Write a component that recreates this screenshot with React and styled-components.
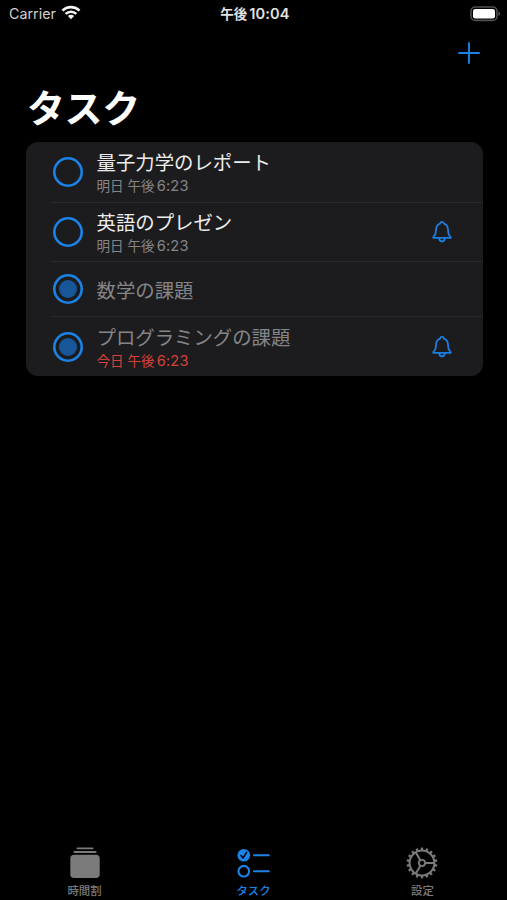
import React from "react";
import styled, { createGlobalStyle } from "styled-components";

const tasks = [
  { id: 1, title: "量子力学のレポート", due: "明日 午後", time: "6:23", height: 60 },
  { id: 2, title: "英語のプレゼン", due: "明日 午後", time: "6:23", height: 59, bell: true },
  { id: 3, title: "数学の課題", height: 55, done: true },
  {
    id: 4,
    title: "プログラミングの課題",
    due: "今日 午後",
    time: "6:23",
    height: 60,
    bell: true,
    done: true,
    late: true,
  },
];

const teeth = Array.from({ length: 18 }, (_, i) => i * 20);

function WifiIcon() {
  return (
    <svg width="20" height="15" viewBox="0 0 20 15" fill="none" stroke="#f4f4f4">
      <path d="M1.5 5.6a12.1 12.1 0 0 1 17 0" strokeWidth="2.7" />
      <path d="M4.6 8.9a7.7 7.7 0 0 1 10.8 0" strokeWidth="2.4" />
      <path d="M10 14.2 6.9 11.1a4.4 4.4 0 0 1 6.2 0z" fill="#f4f4f4" stroke="none" />
    </svg>
  );
}

function BatteryIcon() {
  return (
    <svg width="31" height="16" viewBox="0 0 31 16">
      <rect x="1" y="1" width="26" height="13.4" rx="4.2" fill="none" stroke="#505050" strokeWidth="1.6" />
      <rect x="3" y="3" width="22" height="9.4" rx="2.2" fill="#fff" />
      <path d="M28.4 5.4q1.9.8 1.9 2.3t-1.9 2.3z" fill="#505050" />
    </svg>
  );
}

function BellIcon() {
  return (
    <svg width="20" height="24" viewBox="0 0 20 24" fill="none" stroke="#1b7ee2" strokeWidth="1.8" strokeLinejoin="round">
      <path d="M1.2 17.8c-.2-1.1 1-1.9 1.7-2.9 1-1.4.9-3 1.1-5.4.2-3 1.4-5 4-5.9.3-1.2 1-1.8 2-1.8s1.7.6 2 1.8c2.6.9 3.8 2.9 4 5.9.2 2.4.1 4 1.1 5.4.7 1 1.9 1.8 1.7 2.9z" />
      <path d="M7.2 18c.1 2.3 1.3 3.5 2.8 3.5s2.7-1.2 2.8-3.5" />
    </svg>
  );
}

function StackIcon() {
  return (
    <svg width="34" height="34" viewBox="0 0 34 34" fill="#7b7b7b">
      <rect x="8.5" y="1.4" width="17" height="1.9" rx=".8" />
      <rect x="5.5" y="5" width="23" height="2" rx=".8" />
      <rect x="2.3" y="8.8" width="29.4" height="23.2" rx="3.8" />
    </svg>
  );
}

function ChecklistIcon() {
  return (
    <svg width="34" height="34" viewBox="0 0 34 34" fill="none" stroke="#1b82e8">
      <circle cx="6.8" cy="9.2" r="6.3" fill="#1b82e8" stroke="none" />
      <path d="m4 9.6 2 2.4 3.6-5.6" stroke="#000" strokeWidth="1.5" strokeLinecap="round" />
      <circle cx="6.8" cy="25.2" r="5.3" strokeWidth="2.1" />
      <path d="M17 9.2h14.8M17 25.2h14.8" strokeWidth="2.1" strokeLinecap="round" />
    </svg>
  );
}

function GearIcon() {
  return (
    <svg width="34" height="34" viewBox="1 0 34 34" fill="none" stroke="#7b7b7b">
      <circle cx="17" cy="17" r="12.4" strokeWidth="2" />
      <circle cx="17" cy="17" r="3.1" strokeWidth="1.9" />
      <path d="M20.1 17h9M15.4 14.3 10.8 6.4M15.4 19.7l-4.6 7.9" strokeWidth="2" />
      {teeth.map((angle) => (
        <path key={angle} d="M17 1.6v2.7" strokeWidth="2.3" transform={`rotate(${angle} 17 17)`} />
      ))}
    </svg>
  );
}

function App() {
  return (
    <Screen>
      <GlobalStyle />
      <StatusBar>
        <Carrier>
          <span>Carrier</span>
          <WifiIcon />
        </Carrier>
        <Clock>
          午後<b>10:04</b>
        </Clock>
        <Battery>
          <BatteryIcon />
        </Battery>
      </StatusBar>
      <NavBar>
        <AddButton aria-label="追加">
          <svg width="22" height="22" viewBox="0 0 22 22" stroke="#1b82e8" strokeWidth="1.9" strokeLinecap="round">
            <path d="M11 1v20M1 11h20" />
          </svg>
        </AddButton>
      </NavBar>
      <Title>タスク</Title>
      <TaskList>
        {tasks.map((task) => (
          <TaskRow key={task.id} $height={task.height}>
            <Check $done={task.done} />
            <TaskBody>
              <TaskText>
                <TaskTitle $done={task.done}>{task.title}</TaskTitle>
                {task.due && (
                  <Due $late={task.late}>
                    {task.due}
                    <span>{task.time}</span>
                  </Due>
                )}
              </TaskText>
              {task.bell && <BellIcon />}
            </TaskBody>
          </TaskRow>
        ))}
      </TaskList>
      <TabBar>
        <Tab>
          <StackIcon />
          時間割
        </Tab>
        <Tab $active>
          <ChecklistIcon />
          タスク
        </Tab>
        <Tab>
          <GearIcon />
          設定
        </Tab>
      </TabBar>
    </Screen>
  );
}

const GlobalStyle = createGlobalStyle`
  * {
    box-sizing: border-box;
  }
  body {
    margin: 0;
    background: #000;
    font-family: Inter, "Noto Sans CJK JP", sans-serif;
  }
  svg {
    display: block;
    flex-shrink: 0;
  }
`;

const Screen = styled.div`
  display: flex;
  flex-direction: column;
  width: 507px;
  height: 900px;
  overflow: hidden;
  background: #000;
`;

const StatusBar = styled.header`
  display: grid;
  grid-template-columns: 1fr auto 1fr;
  align-items: center;
  height: 27px;
  padding: 0 6px 0 9px;
  color: #e2e2e2;
`;

const Carrier = styled.div`
  display: flex;
  align-items: center;
  gap: 5px;
  font-size: 14.3px;
  line-height: 20px;
  color: #cfcfcf;
  svg {
    margin-top: -2px;
  }
`;

const Clock = styled.div`
  display: flex;
  align-items: baseline;
  gap: 2px;
  font-size: 13.5px;
  font-weight: 700;
  line-height: 20px;
  b {
    font-size: 14.6px;
    font-weight: 600;
    letter-spacing: 0.1px;
  }
`;

const Battery = styled.div`
  justify-self: end;
`;

const NavBar = styled.nav`
  display: flex;
  justify-content: flex-end;
  align-items: center;
  height: 52px;
  padding-right: 27px;
`;

const AddButton = styled.button`
  padding: 0;
  border: 0;
  background: none;
`;

const Title = styled.h1`
  height: 63px;
  margin: 0;
  padding: 2px 0 0 27px;
  font-size: 38px;
  font-weight: 700;
  line-height: 54px;
  letter-spacing: -0.4px;
  color: #fff;
`;

const TaskList = styled.ul`
  margin: 0 24.5px 0 25.5px;
  padding: 0;
  list-style: none;
  border-radius: 12px;
  background: #1c1c1e;
  overflow: hidden;
`;

const TaskRow = styled.li`
  display: flex;
  align-items: center;
  height: ${(props) => props.$height}px;
  margin-left: 25px;
  padding-left: 2px;
  & + & {
    border-top: 1px solid #2a2a2c;
  }
`;

const Check = styled.span`
  display: flex;
  align-items: center;
  justify-content: center;
  flex-shrink: 0;
  width: 30px;
  height: 30px;
  border-radius: 50%;
  box-shadow: inset 0 0 0 2.6px #1b82e8;
  &::after {
    content: "";
    width: 18px;
    height: 18px;
    border-radius: 50%;
    background: ${(props) => (props.$done ? "#18569a" : "transparent")};
  }
`;

const TaskBody = styled.div`
  display: flex;
  flex: 1;
  align-items: center;
  justify-content: space-between;
  padding: 0 31px 0 14px;
`;

const TaskText = styled.div`
  display: flex;
  flex-direction: column;
  padding-top: 4px;
`;

const TaskTitle = styled.span`
  font-size: 19.4px;
  line-height: 25px;
  color: ${(props) => (props.$done ? "#858587" : "#ececec")};
`;

const Due = styled.span`
  display: flex;
  align-items: baseline;
  gap: 2px;
  font-size: 13.6px;
  line-height: 21px;
  color: ${(props) => (props.$late ? "#d5413a" : "#858587")};
  span {
    font-size: 14.6px;
    letter-spacing: 0.2px;
  }
`;

const TabBar = styled.footer`
  display: grid;
  grid-template-columns: repeat(3, 1fr);
  height: 54px;
  margin-top: auto;
`;

const Tab = styled.div`
  display: flex;
  flex-direction: column;
  align-items: center;
  gap: 4px;
  font-size: 11.4px;
  font-weight: 500;
  line-height: 15px;
  color: ${(props) => (props.$active ? "#1b82e8" : "#7b7b7b")};
`;

export default App;
